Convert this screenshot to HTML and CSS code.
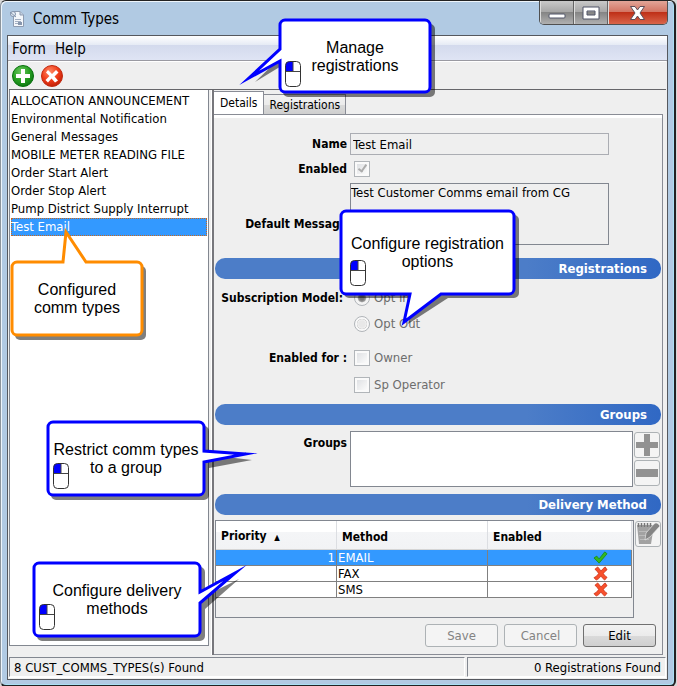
FILE: index.html
```html
<!DOCTYPE html>
<html lang="en">
<head>
  <meta charset="UTF-8">
  <meta name="viewport" content="width=device-width, initial-scale=1.0">
  <title>Comm Types</title>

  <link rel="stylesheet" href="styles.css">
</head>
<body>
  <!-- shared icons -->
  <svg class="defs" aria-hidden="true">
    <defs>
      <radialGradient id="green" cx="40%" cy="30%" r="75%">
        <stop offset="0" stop-color="#6cc860"/>
        <stop offset="0.55" stop-color="#28a022"/>
        <stop offset="1" stop-color="#0b7410"/>
      </radialGradient>
      <radialGradient id="red" cx="40%" cy="30%" r="75%">
        <stop offset="0" stop-color="#ff8a66"/>
        <stop offset="0.55" stop-color="#f03c18"/>
        <stop offset="1" stop-color="#bc1d06"/>
      </radialGradient>
      <symbol id="mouse" viewBox="0 0 16 26">
        <rect x="0.5" y="0.5" width="15" height="25" rx="4" fill="#fff"/>
        <path d="M8 0.5H4.5a4 4 0 0 0-4 4V10.500H8z" fill="#0000ff"/>
        <path d="M8 0.500V10.500M0.500 10.500H15.500" stroke="#444" fill="none"/>
        <rect x="0.5" y="0.5" width="15" height="25" rx="4" fill="none" stroke="#333"/>
      </symbol>
      <symbol id="cross" viewBox="0 0 16 16">
        <path d="M2 3.500L5 1Q7 3 8.500 5.500Q10.500 2.500 13 1L15 4Q12.500 5.500 11 8Q12.500 11 15 12L12.500 15Q10 13.500 8.500 10.500Q6.500 14 3.500 15L1 12.500Q4.500 11 6 8Q4.500 5 2 3.500z" fill="#f8502c" stroke="#c92a10" stroke-width="0.8"/>
      </symbol>
    </defs>
  </svg>

  <div class="window">
    <header class="titlebar">
      <svg class="app-icon" viewBox="0 0 16 18">
        <path d="M4.500 1.500H11L14.500 5V16.500H4.500z" fill="#f4f7fb" stroke="#8d9bb0"/>
        <path d="M11 1.500V5H14.500" fill="#c5d0e0" stroke="#8d9bb0"/>
        <path d="M6 9.500H12M6 11.500H12M6 13.500H9" stroke="#a3afc2"/>
        <circle cx="4" cy="4" r="2.500" fill="#e6edf5" stroke="#8293ac"/>
        <path d="M1 2L7 7" stroke="#8293ac"/>
        <rect x="9" y="12" width="4" height="3" fill="#8796ad"/>
      </svg>
      <h1>Comm Types</h1>
      <div class="controls">
        <button class="min" aria-label="Minimize">
          <svg viewBox="0 0 18 16"><rect x="1" y="9" width="16" height="4" rx="1" fill="#fff" stroke="#505568"/></svg>
        </button>
        <button class="max" aria-label="Maximize">
          <svg viewBox="0 0 18 16"><path d="M1 2H17V14H1zM5 6V10H13V6z" fill="#fff" fill-rule="evenodd" stroke="#505568"/></svg>
        </button>
        <button class="close" aria-label="Close">
          <svg viewBox="0 0 18 16"><path d="M1.500 1.500H6L8.500 5L11 1.500H15.500L11 8L15.500 14.500H11L8.500 11L6 14.500H1.500L6 8z" fill="#fff" stroke="#5c4d58"/></svg>
        </button>
      </div>
    </header>

    <div class="frame">
      <nav class="menubar">
        <button>Form</button>
        <button>Help</button>
      </nav>

      <div class="toolbar">
        <button aria-label="Add">
          <svg viewBox="0 0 22 22">
            <circle cx="11" cy="11" r="10.500" fill="url(#green)" stroke="#08700e"/>
            <path d="M9 4H13V9H18V13H13V18H9V13H4V9H9z" fill="#fff"/>
          </svg>
        </button>
        <button aria-label="Delete">
          <svg viewBox="0 0 22 22">
            <circle cx="11" cy="11" r="10.500" fill="url(#red)" stroke="#c02a10"/>
            <path d="M7 5L11 9L15 5L17.500 7.500L13.500 11.500L17 15.500L14 17.500L10.500 13.500L7 17.500L4.500 15L8.500 11L5 7.500z" fill="#fff"/>
          </svg>
        </button>
      </div>

      <main class="split">
        <div class="side">
          <ul class="types" role="listbox" aria-label="Comm types">
            <li role="option">ALLOCATION ANNOUNCEMENT</li>
            <li role="option">Environmental Notification</li>
            <li role="option">General Messages</li>
            <li role="option">MOBILE METER READING FILE</li>
            <li role="option">Order Start Alert</li>
            <li role="option">Order Stop Alert</li>
            <li role="option">Pump District Supply Interrupt</li>
            <li role="option" class="selected" aria-selected="true">Test Email</li>
          </ul>
        </div>

        <div class="detail">
          <div class="tabs" role="tablist">
            <button class="tab active" role="tab" aria-selected="true">Details</button>
            <button class="tab" role="tab">Registrations</button>
          </div>

          <form class="panel">
            <div class="fields main">
              <label for="name">Name</label>
              <input class="text" id="name" type="text" value="Test Email" readonly>
              <label for="enabled">Enabled</label>
              <div class="option"><input id="enabled" type="checkbox" checked disabled></div>
              <label class="low" for="message">Default Message</label>
              <textarea class="text" id="message" readonly>Test Customer Comms email from CG</textarea>
            </div>

            <h2 class="bar">Registrations</h2>
            <div class="fields model">
              <span class="label wide">Subscription Model:</span>
              <label class="option"><input type="radio" name="model" checked disabled>Opt In</label>
              <label class="option second"><input type="radio" name="model" disabled>Opt Out</label>
            </div>
            <div class="fields for">
              <span class="label">Enabled for :</span>
              <label class="option"><input type="checkbox" disabled>Owner</label>
              <label class="option second"><input type="checkbox" disabled>Sp Operator</label>
            </div>

            <h2 class="bar">Groups</h2>
            <div class="fields groups">
              <span class="label" id="groups-label">Groups</span>
              <ul class="group-list" role="listbox" aria-labelledby="groups-label"></ul>
              <div class="stack">
                <button type="button" class="square" aria-label="Add group" disabled>
                  <svg viewBox="0 0 24 24"><path d="M9 1H15V9H23V15H15V23H9V15H1V9H9z" fill="#929292"/></svg>
                </button>
                <button type="button" class="square" aria-label="Remove group" disabled>
                  <svg viewBox="0 0 24 24"><path d="M1 8H23V16H1z" fill="#929292"/></svg>
                </button>
              </div>
            </div>

            <h2 class="bar">Delivery Method</h2>
            <div class="delivery">
              <div class="table-box">
                <table>
                  <thead>
                    <tr><th class="priority">Priority <span class="sort">▲</span></th><th class="method">Method</th><th>Enabled</th></tr>
                  </thead>
                  <tbody>
                    <tr class="selected">
                      <td class="num">1</td><td>EMAIL</td>
                      <td class="state"><svg viewBox="0 0 16 16"><path d="M1 8.500L4 6.500L6.500 9.500L12.500 2L15 4L6.500 14z" fill="#35b81e" stroke="#138a0c" stroke-width="0.8"/></svg></td>
                    </tr>
                    <tr><td></td><td>FAX</td><td class="state"><svg><use href="#cross"/></svg></td></tr>
                    <tr><td></td><td>SMS</td><td class="state"><svg><use href="#cross"/></svg></td></tr>
                  </tbody>
                </table>
              </div>
              <button type="button" class="square" aria-label="Edit delivery method" disabled>
                <svg viewBox="0 0 24 24">
                  <path d="M1 3H18L15 22H3z" fill="#a2a2a2"/>
                  <path d="M2.500 1V5M5.500 1V5M8.500 1V5M11.500 1V5M14.500 1V5" stroke="#777" stroke-width="1.500"/>
                  <path d="M3 9.500H14M3 13.500H10M4 17.500H13" stroke="#bbb"/>
                  <path d="M18 2Q21 -1 24 4L14 15L9 18L10 11z" fill="#858585" stroke="#f2f2f2" stroke-width="0.6"/>
                </svg>
              </button>
            </div>

            <div class="actions">
              <button type="button" disabled>Save</button>
              <button type="button" disabled>Cancel</button>
              <button type="button">Edit</button>
            </div>
          </form>
        </div>
      </main>

      <footer class="status">
        <span>8 CUST_COMMS_TYPES(s) Found</span>
        <span class="count">0 Registrations Found</span>
      </footer>
    </div>
  </div>

  <!-- callouts over the window -->
  <div class="callout manage">
    <svg class="shape">
      <path class="shadow" d="M9 5H151a5 5 0 0 1 5 5V73a5 5 0 0 1-5 5H9a5 5 0 0 1-5-5V46L-24 63L4 36V10a5 5 0 0 1 5-5z"/>
      <path d="M6 1H146a5 5 0 0 1 5 5V68a5 5 0 0 1-5 5H6a5 5 0 0 1-5-5V42L-30 59L1 30V6a5 5 0 0 1 5-5z"/>
    </svg>
    <svg class="mouse"><use href="#mouse"/></svg>
    <p>Manage<br>registrations</p>
  </div>

  <div class="callout types-note">
    <svg class="shape">
      <path class="shadow" d="M9 5H130a5 5 0 0 1 5 5V74a5 5 0 0 1-5 5H9a5 5 0 0 1-5-5V10a5 5 0 0 1 5-5z"/>
      <path d="M6 1H52L55 -29L75 1H126a5 5 0 0 1 5 5V69a5 5 0 0 1-5 5H6a5 5 0 0 1-5-5V6a5 5 0 0 1 5-5z"/>
    </svg>
    <p>Configured<br>comm types</p>
  </div>

  <div class="callout options">
    <svg class="shape">
      <path class="shadow" d="M9 5H174a5 5 0 0 1 5 5V83a5 5 0 0 1-5 5H108L68 114L74 88H9a5 5 0 0 1-5-5V10a5 5 0 0 1 5-5z"/>
      <path d="M6 1H169a5 5 0 0 1 5 5V79a5 5 0 0 1-5 5H101L64 112L70 84H6a5 5 0 0 1-5-5V6a5 5 0 0 1 5-5z"/>
    </svg>
    <svg class="mouse"><use href="#mouse"/></svg>
    <p>Configure registration<br>options</p>
  </div>

  <div class="callout restrict">
    <svg class="shape">
      <path class="shadow" d="M9 5H157a5 5 0 0 1 5 5V34L205 39L162 47V74a5 5 0 0 1-5 5H9a5 5 0 0 1-5-5V10a5 5 0 0 1 5-5z"/>
      <path d="M6 1H152a5 5 0 0 1 5 5V30L199 33L157 41V69a5 5 0 0 1-5 5H6a5 5 0 0 1-5-5V6a5 5 0 0 1 5-5z"/>
    </svg>
    <svg class="mouse"><use href="#mouse"/></svg>
    <p>Restrict comm types<br>to a group</p>
  </div>

  <div class="callout methods">
    <svg class="shape">
      <path class="shadow" d="M9 5H167a5 5 0 0 1 5 5V34L206 17L172 47V74a5 5 0 0 1-5 5H9a5 5 0 0 1-5-5V10a5 5 0 0 1 5-5z"/>
      <path d="M6 1H162a5 5 0 0 1 5 5V30L202 11L167 41V69a5 5 0 0 1-5 5H6a5 5 0 0 1-5-5V6a5 5 0 0 1 5-5z"/>
    </svg>
    <svg class="mouse"><use href="#mouse"/></svg>
    <p>Configure delivery<br>methods</p>
  </div>
</body>
</html>
```

FILE: styles.css
```css
*{
  box-sizing: border-box;
  margin: 0;
  padding: 0;
}

body{
  position: relative;
  min-height: 100vh;
  display: flex;
  font: 13px/16px "DejaVu Sans Condensed", "Noto Sans", sans-serif;
  color: #000;
  background: #d8d8d8;
}
button,
input,
textarea{
  font: inherit;
  color: inherit;
}
button{
  border: 0;
  background: none;
}
ul{
  list-style: none;
}
svg{
  display: block;
}
.defs{
  position: absolute;
  width: 0;
  height: 0;
}

/* window */
.window{
  flex: 1;
  display: flex;
  flex-direction: column;
  margin-right: 1px;
  padding: 0 6px 5px;
  border: 1px solid #222;
  border-left-color: #8c949c;
  border-right: 2px solid #222;
  border-bottom: 2px solid #222;
  border-radius: 6px;
  background: #b1cae3;
  box-shadow: inset 1px 1px #eef5fb, inset -1px -1px #a9e0f4;
}
.titlebar{
  display: flex;
  height: 34px;
  padding-left: 2px;
}
.app-icon{
  width: 16px;
  height: 18px;
  margin: 9px 8px 0 0;
}
.titlebar h1{
  flex: 1;
  font-size: 15px;
  font-weight: normal;
  line-height: 36px;
}
.controls{
  display: flex;
  height: 24px;
  border: 1px solid #505050;
  border-top: 0;
  border-radius: 0 0 5px 5px;
  overflow: hidden;
}
.controls button{
  display: flex;
  justify-content: center;
  align-items: center;
  width: 34px;
  border-right: 1px solid #666;
  background: linear-gradient(#c9c9c9, #a6a6a6 48%, #858585 50%, #b0b0b0);
  box-shadow: inset 1px 0 #ddd;
}
.controls .close{
  width: 59px;
  border: 0;
  background: linear-gradient(#e2a598, #d27462 48%, #bf3018 50%, #d9654a);
}
.controls svg{
  width: 18px;
  height: 16px;
}
.frame{
  flex: 1;
  display: flex;
  flex-direction: column;
  padding: 0 1px 1px;
  border: 1px solid #55585e;
  background: #efefef;
}

/* menu and toolbar */
.menubar{
  display: flex;
  gap: 9px;
  height: 25px;
  margin: 0 -1px;
  padding-left: 4px;
  border-bottom: 1px solid #9a9aa2;
  background: linear-gradient(#fff, #e6ebf5 36%, #d3daed 38%, #dfe4f4);
}
.menubar button{
  padding-top: 2px;
  font-size: 15px;
}
.toolbar{
  display: flex;
  gap: 7px;
  height: 28px;
  padding: 2px 3px;
  border-top: 1px solid #fff;
}
.toolbar svg{
  width: 22px;
  height: 22px;
}

/* split */
.split{
  flex: 1;
  display: flex;
  border-top: 1px solid #66666a;
}
.side{
  flex: 0 0 203px;
  display: flex;
  padding-bottom: 9px;
  border-right: 1px solid #fff;
}
.types{
  width: 200px;
  padding: 2px 1px;
  border: 1px solid #828790;
  border-top: 0;
  background: #fff;
}
.types li{
  height: 18px;
  line-height: 18px;
}
.types .selected{
  color: #fff;
  background: #3399ff;
  outline: 1px dotted #c8681e;
  outline-offset: -1px;
}
.detail{
  flex: 1;
  min-width: 0;
  display: flex;
  flex-direction: column;
  padding-right: 3px;
  border-left: 2px solid #77777c;
}
.tabs{
  display: flex;
  align-items: flex-end;
  height: 24px;
  padding-top: 1px;
}
.tab{
  height: 20px;
  padding: 0 5px;
  border: 1px solid #898c95;
  border-left: 0;
  border-bottom: 0;
  font-size: 12px;
  background: linear-gradient(#f2f2f2, #ebebeb 50%, #dadada 52%, #cfcfcf);
}
.tab.active{
  height: 23px;
  padding: 0 6px;
  background: #fff;
}
.panel{
  flex: 1;
  padding: 0 1px 7px;
  border: 1px solid #898c95;
  border-left: 0;
  box-shadow: inset 0 3px #fff;
}

/* fields */
.fields{
  display: grid;
  grid-template-columns: 132px 1fr;
  column-gap: 3px;
  align-items: center;
}
.fields > label:not(.option),
.label{
  text-align: right;
  font-weight: bold;
  font-size: 12px;
  white-space: nowrap;
}
.label.wide{
  padding-right: 4px;
}
.fields .low{
  align-self: end;
  padding-bottom: 13px;
}
.main{
  row-gap: 6px;
  padding: 18px 52px 13px 0;
}
.text{
  width: 100%;
  height: 22px;
  padding: 0 2px;
  border: 1px solid #abadb3;
  background: transparent;
  outline: 0;
}
textarea.text{
  display: block;
  height: 62px;
  padding: 1px 0;
  border-color: #828790;
  resize: none;
}
.option{
  display: flex;
  align-items: center;
  gap: 4px;
  padding-left: 4px;
  color: #6d6d6d;
}
.option.second{
  grid-column: 2;
}
.option input{
  appearance: none;
  width: 16px;
  height: 16px;
  border: 1px solid #b1b5b9;
  background: linear-gradient(135deg, #dfe1e4, #fbfbfb) content-box, #fafafa;
  padding: 2px;
}
.option input[type=radio]{
  border-radius: 50%;
  background: radial-gradient(#e8e8e8 30%, #f0f0f0 44%, #d0d0d0 50%, #f8f8f8 56%);
}
.option input[type=radio]:checked{
  background: radial-gradient(#777 20%, #999 36%, #f4f4f4 48%);
}
.option input[type=checkbox]:checked::after{
  content: '';
  display: block;
  width: 5px;
  height: 9px;
  margin-left: 3px;
  border-right: 2px solid #acacac;
  border-bottom: 2px solid #acacac;
  transform: translateY(-1px) rotate(35deg);
  box-sizing: border-box;
}
.model{
  row-gap: 10px;
  padding: 11px 0 9px;
}
.for{
  row-gap: 11px;
  padding: 9px 0 11px;
}
.bar{
  height: 21px;
  padding-right: 14px;
  border-radius: 10px;
  font-size: 13px;
  line-height: 22px;
  text-align: right;
  color: #fff;
  background: linear-gradient(90deg, #4c7dc8 70%, #3068c4);
}
.groups{
  grid-template-columns: 132px 1fr 26px;
  padding: 6px 1px 7px 0;
  align-items: start;
}
.groups .label{
  padding-top: 4px;
}
.group-list{
  height: 56px;
  margin-right: -2px;
  border: 1px solid #828790;
  background: #fff;
}
.groups .stack{
  display: grid;
  gap: 2px;
  padding-top: 1px;
}
.square{
  display: grid;
  place-items: center;
  width: 26px;
  height: 26px;
  border: 1px solid #adb2b5;
  border-radius: 3px;
  background: #f4f4f4;
}
.square svg{
  width: 24px;
  height: 24px;
}

/* delivery table */
.delivery{
  display: flex;
  gap: 1px;
  padding: 5px 0 6px;
}
.delivery .square{
  margin-top: 1px;
}
.table-box{
  flex: 1;
  height: 98px;
  padding-right: 1px;
  border: 1px solid #828790;
}
table{
  width: 100%;
  border-collapse: separate;
  border-spacing: 0;
  table-layout: fixed;
}
th{
  height: 29px;
  padding: 3px 5px 0;
  text-align: left;
  font-size: 12px;
  border-right: 1px solid #dcdee2;
  border-bottom: 1px solid #d5d5d5;
  background: linear-gradient(#fff 38%, #f4f5f7 40%, #f2f3f5);
}
.priority{
  width: 121px;
}
.method{
  width: 151px;
}
.sort{
  margin-left: 4px;
  font-size: 8px;
}
td{
  height: 16px;
  padding: 0 1px;
  line-height: 15px;
  border-right: 1px solid #808080;
  border-bottom: 1px solid #808080;
  background: #fff;
}
.selected td{
  color: #fff;
  background: #3399ff;
}
.num{
  text-align: right;
}
.state svg{
  width: 15px;
  height: 15px;
  margin: 0 22px 0 auto;
}
.actions{
  display: flex;
  justify-content: flex-end;
  gap: 6px;
  padding-right: 5px;
}
.actions button{
  width: 73px;
  height: 23px;
  border: 1px solid #707070;
  border-radius: 3px;
  background: linear-gradient(#f2f2f2, #ebebeb 50%, #dadada 52%, #cfcfcf);
}
.actions button:disabled{
  border-color: #adb2b5;
  color: #838383;
  background: #f4f4f4;
}

/* status */
.status{
  display: flex;
  gap: 2px;
  height: 21px;
  margin-top: 2px;
  line-height: 20px;
  border-bottom: 1px solid #fff;
}
.status span{
  flex: 1;
  padding: 0 4px;
  border: 1px solid #828790;
  border-bottom-color: #fff;
  border-right-color: #fff;
}
.status .count{
  flex: 0 0 199px;
  text-align: right;
}

/* callouts */
.callout{
  position: absolute;
  display: flex;
  justify-content: center;
  align-items: center;
  height: 75px;
  font: 16px/18px "Liberation Sans", Arial, sans-serif;
  text-align: center;
}
.callout p{
  position: relative;
  white-space: nowrap;
}
.shape{
  position: absolute;
  top: 0;
  left: 0;
  width: 100%;
  height: 100%;
  overflow: visible;
  fill: #fff;
  stroke: #0000ff;
  stroke-width: 3;
  stroke-miterlimit: 14;
}
.shape .shadow{
  fill: rgba(0,0,0,0.5);
  stroke: none;
}
.mouse{
  position: absolute;
  left: 6px;
  bottom: 7px;
  width: 16px;
  height: 26px;
}
.manage{
  top: 19px;
  left: 279px;
  width: 152px;
}
.types-note{
  top: 261px;
  left: 11px;
  width: 132px;
}
.types-note .shape{
  stroke: #ff8c00;
}
.options{
  top: 210px;
  left: 340px;
  width: 175px;
  height: 85px;
}
.options .mouse{
  left: 10px;
  bottom: 9px;
}
.restrict{
  top: 421px;
  left: 47px;
  width: 158px;
}
.methods{
  top: 562px;
  left: 33px;
  width: 168px;
}
```
